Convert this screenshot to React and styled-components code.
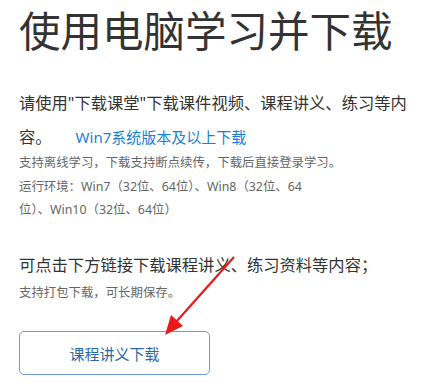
import React from "react";
import styled, { createGlobalStyle } from "styled-components";

const GlobalStyle = createGlobalStyle`
  html, body {
    margin: 0;
    padding: 0;
    background: #fff;
  }
  body {
    font-family: "Noto Sans", "Noto Sans CJK SC", sans-serif;
    color: #333;
  }
`;

const Page = styled.div`
  position: relative;
  width: 421px;
  height: 382px;
  overflow: hidden;
  padding-left: 19px;
  box-sizing: border-box;
`;

const Title = styled.h1`
  margin: 0;
  font-size: 41.5px;
  font-weight: 400;
  line-height: 62px;
  color: #333;
  white-space: nowrap;
`;

const Lead = styled.p`
  margin: ${(p) => p.$top || 0}px 0 0;
  font-size: 16.3px;
  line-height: ${(p) => p.$lh || 34}px;
  color: #333;
  white-space: nowrap;
`;

const DownloadLink = styled.a`
  display: inline-block;
  margin-left: 24px;
  font-size: 15px;
  color: #1a7fd8;
  text-decoration: none;
`;

const Note = styled.p`
  margin: ${(p) => p.$top || 0}px 0 0;
  font-size: 12.4px;
  line-height: 23.5px;
  color: #666;
  white-space: nowrap;
`;

const Button = styled.button`
  display: flex;
  align-items: center;
  justify-content: center;
  margin-top: 27px;
  width: 191px;
  height: 44px;
  padding: 0;
  background: #fff;
  border: 1px solid #6d9fd0;
  border-radius: 5px;
  font-family: inherit;
  font-size: 15px;
  color: #2d6aa8;
`;

const Arrow = styled.svg`
  position: absolute;
  left: 0;
  top: 0;
  pointer-events: none;
`;

export default function App() {
  return (
    <>
      <GlobalStyle />
      <Page>
        <Title>使用电脑学习并下载</Title>
        <Lead $top={24}>
          请使用"下载课堂"下载课件视频、课程讲义、练习等内
          <br />
          容。
          <DownloadLink href="#">Win7系统版本及以上下载</DownloadLink>
        </Lead>
        <Note $top={-3}>
          支持离线学习，下载支持断点续传，下载后直接登录学习。
          <br />
          运行环境：Win7（32位、64位）、Win8（32位、64
          <br />
          位）、Win10（32位、64位）
        </Note>
        <Lead $top={28} $lh={30}>
          可点击下方链接下载课程讲义、练习资料等内容；
        </Lead>
        <Note $top={1}>支持打包下载，可长期保存。</Note>
        <Button>课程讲义下载</Button>
        <Arrow width="421" height="382" viewBox="0 0 421 382">
          <line x1="234" y1="257" x2="176" y2="322" stroke="#e8191a" strokeWidth="2.2" />
          <polygon points="165,335 171,315 183,326" fill="#e8191a" />
        </Arrow>
      </Page>
    </>
  );
}
